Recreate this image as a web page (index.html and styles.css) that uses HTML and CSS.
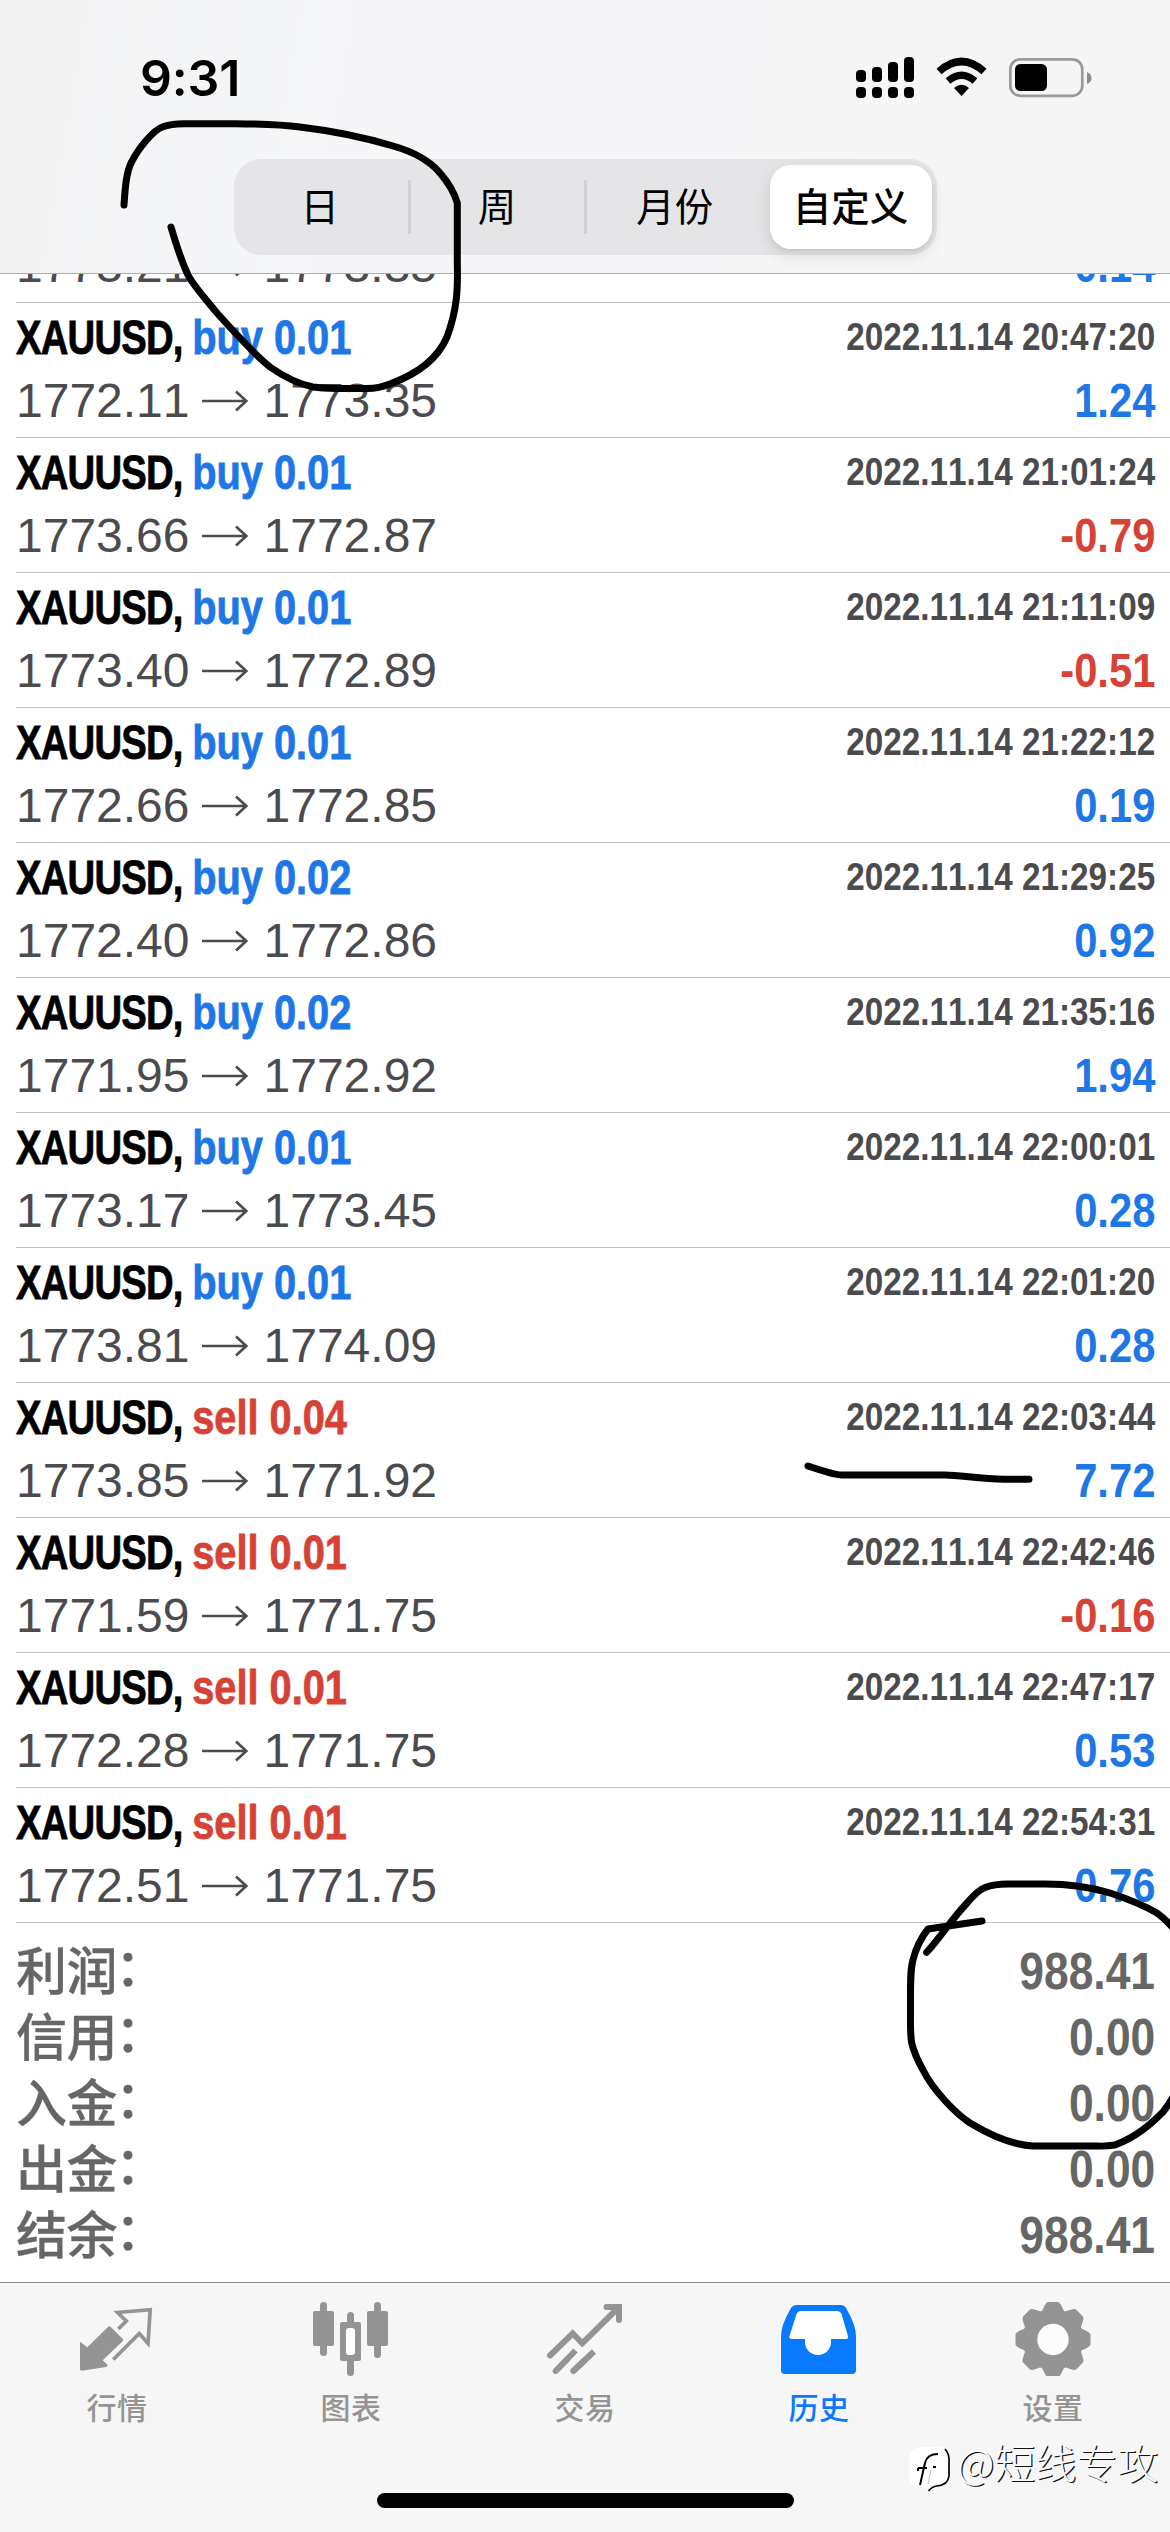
FILE: index.html
```html
<!DOCTYPE html>
<html lang="zh-CN">
<head>
<meta charset="utf-8">
<title>历史</title>
<link rel="stylesheet" href="styles.css">
</head>
<body>
<svg width="0" height="0" class="defs">
  <symbol id="arrow" viewBox="0 0 46 22"><path d="M0 11H44M34 1.5L44.3 11L34 20.5" fill="none" stroke="currentColor" stroke-width="2.6"/></symbol>
</svg>
<div class="screen">
  <header class="header">
    <div class="status">
      <span class="time">9:31</span>
      <svg class="status-icons" width="240" height="44" viewBox="854 55 240 44">
        <rect x="856" y="70" width="10" height="12" rx="4"/><rect x="872" y="67" width="10" height="15" rx="4"/><rect x="888" y="62" width="10" height="20" rx="4"/><rect x="904" y="57" width="10" height="25" rx="4"/>
        <rect x="856" y="87" width="10" height="11" rx="4"/><rect x="872" y="87" width="10" height="11" rx="4"/><rect x="888" y="87" width="10" height="11" rx="4"/><rect x="904" y="87" width="10" height="11" rx="4"/>
        <path d="M939 71.5Q961.500 51.500 984 71.500" fill="none" stroke="#000" stroke-width="7.500"/>
        <path d="M948 81Q961.500 69.500 975 81" fill="none" stroke="#000" stroke-width="7"/>
        <path d="M954 88Q961.500 81.500 969 88L961.500 96Z"/>
        <rect x="1010.300" y="59.300" width="72" height="36.500" rx="10" fill="none" stroke="#999" stroke-width="2.700"/>
        <rect x="1015" y="64" width="32" height="27" rx="5.500"/>
        <path d="M1087 72Q1091.500 74 1091.500 78T1087 84Z" fill="#8c8c8c"/>
      </svg>
    </div>
    <nav class="segments">
      <span class="segment">日</span><span class="segment divided">周</span><span class="segment divided">月份</span><span class="segment selected">自定义</span>
    </nav>
  </header>

  <main class="history">
    <div class="clipped">
      <div class="deal"><div class="line"><span class="name">XAUUSD, <b class="buy">buy 0.01</b></span><span class="date">2022.11.14 20:44:10</span></div><div class="line"><span class="prices">1773.21<svg class="to"><use href="#arrow"/></svg>1773.35</span><span class="profit buy">0.14</span></div></div>
    </div>
    <div class="deal"><div class="line"><span class="name">XAUUSD, <b class="buy">buy 0.01</b></span><span class="date">2022.11.14 20:47:20</span></div><div class="line"><span class="prices">1772.11<svg class="to"><use href="#arrow"/></svg>1773.35</span><span class="profit buy">1.24</span></div></div>
    <div class="deal"><div class="line"><span class="name">XAUUSD, <b class="buy">buy 0.01</b></span><span class="date">2022.11.14 21:01:24</span></div><div class="line"><span class="prices">1773.66<svg class="to"><use href="#arrow"/></svg>1772.87</span><span class="profit sell">-0.79</span></div></div>
    <div class="deal"><div class="line"><span class="name">XAUUSD, <b class="buy">buy 0.01</b></span><span class="date">2022.11.14 21:11:09</span></div><div class="line"><span class="prices">1773.40<svg class="to"><use href="#arrow"/></svg>1772.89</span><span class="profit sell">-0.51</span></div></div>
    <div class="deal"><div class="line"><span class="name">XAUUSD, <b class="buy">buy 0.01</b></span><span class="date">2022.11.14 21:22:12</span></div><div class="line"><span class="prices">1772.66<svg class="to"><use href="#arrow"/></svg>1772.85</span><span class="profit buy">0.19</span></div></div>
    <div class="deal"><div class="line"><span class="name">XAUUSD, <b class="buy">buy 0.02</b></span><span class="date">2022.11.14 21:29:25</span></div><div class="line"><span class="prices">1772.40<svg class="to"><use href="#arrow"/></svg>1772.86</span><span class="profit buy">0.92</span></div></div>
    <div class="deal"><div class="line"><span class="name">XAUUSD, <b class="buy">buy 0.02</b></span><span class="date">2022.11.14 21:35:16</span></div><div class="line"><span class="prices">1771.95<svg class="to"><use href="#arrow"/></svg>1772.92</span><span class="profit buy">1.94</span></div></div>
    <div class="deal"><div class="line"><span class="name">XAUUSD, <b class="buy">buy 0.01</b></span><span class="date">2022.11.14 22:00:01</span></div><div class="line"><span class="prices">1773.17<svg class="to"><use href="#arrow"/></svg>1773.45</span><span class="profit buy">0.28</span></div></div>
    <div class="deal"><div class="line"><span class="name">XAUUSD, <b class="buy">buy 0.01</b></span><span class="date">2022.11.14 22:01:20</span></div><div class="line"><span class="prices">1773.81<svg class="to"><use href="#arrow"/></svg>1774.09</span><span class="profit buy">0.28</span></div></div>
    <div class="deal"><div class="line"><span class="name">XAUUSD, <b class="sell">sell 0.04</b></span><span class="date">2022.11.14 22:03:44</span></div><div class="line"><span class="prices">1773.85<svg class="to"><use href="#arrow"/></svg>1771.92</span><span class="profit buy">7.72</span></div></div>
    <div class="deal"><div class="line"><span class="name">XAUUSD, <b class="sell">sell 0.01</b></span><span class="date">2022.11.14 22:42:46</span></div><div class="line"><span class="prices">1771.59<svg class="to"><use href="#arrow"/></svg>1771.75</span><span class="profit sell">-0.16</span></div></div>
    <div class="deal"><div class="line"><span class="name">XAUUSD, <b class="sell">sell 0.01</b></span><span class="date">2022.11.14 22:47:17</span></div><div class="line"><span class="prices">1772.28<svg class="to"><use href="#arrow"/></svg>1771.75</span><span class="profit buy">0.53</span></div></div>
    <div class="deal"><div class="line"><span class="name">XAUUSD, <b class="sell">sell 0.01</b></span><span class="date">2022.11.14 22:54:31</span></div><div class="line"><span class="prices">1772.51<svg class="to"><use href="#arrow"/></svg>1771.75</span><span class="profit buy">0.76</span></div></div>
    <div class="summary">
      <div class="total"><span class="label">利润<i>：</i></span><span class="amount">988.41</span></div>
      <div class="total"><span class="label">信用<i>：</i></span><span class="amount">0.00</span></div>
      <div class="total"><span class="label">入金<i>：</i></span><span class="amount">0.00</span></div>
      <div class="total"><span class="label">出金<i>：</i></span><span class="amount">0.00</span></div>
      <div class="total"><span class="label">结余<i>：</i></span><span class="amount">988.41</span></div>
    </div>
  </main>

  <footer class="footer">
    <nav class="tabs">
      <div class="tab">
        <svg class="tab-icon" viewBox="0 0 76 76"><path fill="currentColor" d="M1 41.700L8.300 47.300L29 27Q30.300 25.500 31.800 27L43.700 38.700Q45 40 43.700 41.300L23.700 60.300L28.300 64.500Q29 66.500 27 67L3 70.700L1 70Z"/><path d="M39.300 29L47.300 21L38.500 12.500L71.200 9.700L69 43.500L60.300 33.500L34.300 59.500" fill="none" stroke="currentColor" stroke-width="3.700"/></svg>
        <span>行情</span>
      </div>
      <div class="tab">
        <svg class="tab-icon" viewBox="0 0 76 76" fill="currentColor"><rect x="0" y="11" width="21" height="35" rx="2"/><rect x="7" y="2" width="7" height="54" rx="3.500"/><rect x="34" y="12" width="7" height="64" rx="3.500"/><rect x="27" y="22" width="21" height="39" rx="2"/><rect x="33" y="28" width="9" height="27" rx="3" fill="#fff"/><rect x="54" y="11" width="21" height="35" rx="2"/><rect x="61" y="2" width="7" height="56" rx="3.500"/></svg>
        <span>图表</span>
      </div>
      <div class="tab">
        <svg class="tab-icon" viewBox="0 0 76 76" fill="none" stroke="currentColor" stroke-width="6"><path stroke-linecap="round" d="M3 55.500L25.700 33.500L35.300 43.300L71 8"/><path stroke-linecap="round" d="M59.500 7H72V20"/><path d="M69 4H75V10Z" fill="currentColor" stroke="none"/><path d="M28.500 50.500L8.700 71M47 51.500L26.300 71"/><path stroke-linecap="round" d="M8.700 71L20 59.500M26.300 71L38 60"/></svg>
        <span>交易</span>
      </div>
      <div class="tab active">
        <svg class="tab-icon" viewBox="0 0 76 76"><path fill="currentColor" d="M16 5H60Q63.500 5 65 8Q75 25 75 36V70Q75 74 71 74H4Q0 74 0 70V36Q0 25 10 8Q12 5 16 5Z"/><path fill="#fff" d="M20 11H56Q59 11 60.500 14L67 36Q67.500 39 65 39H50V42A13 13 0 0 1 24 42V39H11Q7.500 39 8.500 36L15.500 14Q17 11 20 11Z"/></svg>
        <span>历史</span>
      </div>
      <div class="tab">
        <svg class="tab-icon" viewBox="-38 -39.500 76 76"><g fill="currentColor"><circle r="30.500"/><g id="teeth"><path id="tooth" d="M-12-27C-9.500-30-8-37.500-4.500-37.500H4.500C8-37.500 9.500-30 12-27Z"/><use href="#tooth" transform="rotate(90)"/><use href="#tooth" transform="rotate(180)"/><use href="#tooth" transform="rotate(270)"/></g><use href="#teeth" transform="rotate(45)"/></g><circle r="15.700" fill="#fcfcfc"/></svg>
        <span>设置</span>
      </div>
    </nav>
    <div class="home"></div>
  </footer>

  <div class="watermark">
    <svg width="44" height="50" viewBox="0 0 44 50"><path d="M12 1H31Q41 2 41 13V29Q41 40 29 40L21 46V41H11Q1 40 1 29V13Q2 2 12 1Z" fill="#fff"/><path d="M37 3Q42 8 41 18V30Q40 39 29 40Q24 40.500 20.500 45" fill="none" stroke="#000" stroke-width="1.700"/><path d="M12 39L17 17Q19 8 30 8M10 22H19M25 21H28M10 22V25" fill="none" stroke="#000" stroke-width="2"/><path d="M20 38L23 24" fill="none" stroke="#bbb" stroke-width="1"/></svg>
    <span>@短线专攻</span>
  </div>
  <svg class="ink" width="1170" height="2532" viewBox="0 0 1170 2532">
    <path d="M124 205C125 190 126 172 131.700 161.700C138 149 153 130 163 126.700Q170 124 184 123.700H235C265 124 285 125 300 127Q350 133 393 146Q425 155 440 173Q453 188 457.300 203V263C458 290 457 310 447 337C438 358 420 373 390 384Q379 388.500 367 388.500C345 388.500 328 389 313 387Q293 383 270 367C255 355 235 333 217 313C200 292 193 285 188 275Q180 258 171 227"/>
    <path d="M808 1466Q834 1475 842 1475H945C960 1475 980 1479 1004 1479.300H1029"/>
    <path d="M926.700 1952.300C942 1935 952 1919 967 1903Q978 1890 985 1887.500Q995 1884 1007 1884H1045Q1080 1884 1110 1893Q1140 1903 1157 1913Q1168 1921 1180 1936M1180 2085Q1170 2103 1163 2112C1150 2125 1136 2137 1115 2145Q1105 2146.500 1097 2146H1033C1012 2145 990 2135 970 2123C955 2113 933 2090 923 2070Q914 2054 911.500 2042C910 2030 910.500 2020 910.500 2010C910.500 1985 910 1970 913 1960Q917 1943 928 1929L982 1921"/>
  </svg>
</div>
</body>
</html>
```
FILE: styles.css
```css
* { box-sizing: border-box; }
body { margin: 0; background: #fff; font-family: "Liberation Sans", "Noto Sans CJK SC", sans-serif; font-kerning: none; color: #4b4b4e; }
.defs { display: block; }
.screen { position: relative; width: 1170px; height: 2532px; overflow: hidden; display: flex; flex-direction: column; }

.header { height: 274px; flex: none; border-bottom: 1px solid #adadaf; background: linear-gradient(100deg, #f1f1f2 0, #f5f6f8 25%, #f5f5f6 100%); }
.status { height: 159px; padding: 55px 76px 0 140px; display: flex; justify-content: space-between; align-items: flex-start; }
.time { font: 600 50px/44px Inter, sans-serif; letter-spacing: -.2px; color: #000; margin-top: 1px; }
.status-icons { display: block; }
.segments { width: 703px; height: 96px; margin-left: 233.5px; padding: 6px 5px 6px 0; display: flex; background: #e5e5e7; border-radius: 27px; }
.segment { flex: 0 0 175.7px; display: flex; align-items: center; justify-content: center; position: relative; padding-top: 2px; font: 400 38.5px/1 "Liberation Sans", "Noto Sans CJK SC", sans-serif; color: #000; }
.segment:first-child { padding-right: 3px; }
.divided::before { content: ""; position: absolute; left: -1px; top: 15px; width: 3px; height: 54px; background: #d0d0d3; border-radius: 2px; }
.divided + .divided { padding-left: 4px; }
.selected { flex: 0 0 162px; margin-left: 9px; font-weight: 500; background: #fff; border-radius: 21px; box-shadow: 0 6px 16px rgba(0,0,0,.12), 0 2px 3px rgba(0,0,0,.05); }

.history { height: 2008px; flex: none; background: #fff; }
.clipped { height: 29px; overflow: hidden; display: flex; flex-direction: column; justify-content: flex-end; }
.deal { flex: none; height: 135px; margin-left: 16px; padding: 5px 15px 0 0; border-bottom: 1px solid #bebec0; }
.line { height: 62px; display: flex; justify-content: space-between; align-items: flex-start; white-space: nowrap; }
.name { font-size: 48px; font-weight: 700; line-height: 59px; letter-spacing: -1px; color: #000; -webkit-text-stroke: .8px currentColor; transform: scaleX(.797); transform-origin: left; }
.name b { display: inline-block; letter-spacing: 0; transform: scaleX(1.04); transform-origin: left; }
.date { font-size: 39px; font-weight: 700; line-height: 58px; transform: scaleX(.853); transform-origin: right; }
.prices { font-size: 48px; line-height: 62px; display: flex; align-items: center; }
.to { width: 46px; height: 22px; margin: 0 16px 0 12px; }
.profit { font-size: 48px; font-weight: 700; line-height: 62px; transform: scaleX(.87); transform-origin: right; }
.buy { color: #1e77e6; }
.sell { color: #d74236; }

.summary { padding: 15px 15px 0 16px; color: #666; }
.total { height: 66px; display: flex; justify-content: space-between; align-items: flex-start; white-space: nowrap; }
.label { font-size: 51px; font-weight: 500; line-height: 69px; letter-spacing: -.4px; -webkit-text-stroke: .3px currentColor; }
.label i { display: inline-block; font-style: normal; transform: translate(-2px, -4px); }
.amount { font-size: 51px; font-weight: 700; line-height: 67px; transform: scaleX(.87); transform-origin: right; }

.footer { flex: 1; border-top: 1px solid #8b8b8e; background: #f6f6f6; }
.tabs { height: 210px; padding-top: 17px; display: grid; grid-template-columns: repeat(5, 1fr); align-items: start; }
.tab { display: flex; flex-direction: column; align-items: center; color: #949494; font: 500 30px/40px "Noto Sans CJK SC", sans-serif; }
.tab span { margin-top: 10px; letter-spacing: .4px; }
.tab-icon { width: 76px; height: 76px; }
.active { color: #087aff; }
.home { width: 417px; height: 15px; margin: 0 auto; border-radius: 8px; background: #000; }

.watermark { position: absolute; left: 908px; top: 2446px; display: flex; align-items: flex-start; gap: 5px; color: #fafafa; font: 300 41px/30px "Noto Sans CJK SC", sans-serif; text-shadow: 1.2px 1.2px 0 #111; }
.ink { position: absolute; left: 0; top: 0; fill: none; stroke: #000; stroke-width: 7; stroke-linecap: round; stroke-linejoin: round; }
```
